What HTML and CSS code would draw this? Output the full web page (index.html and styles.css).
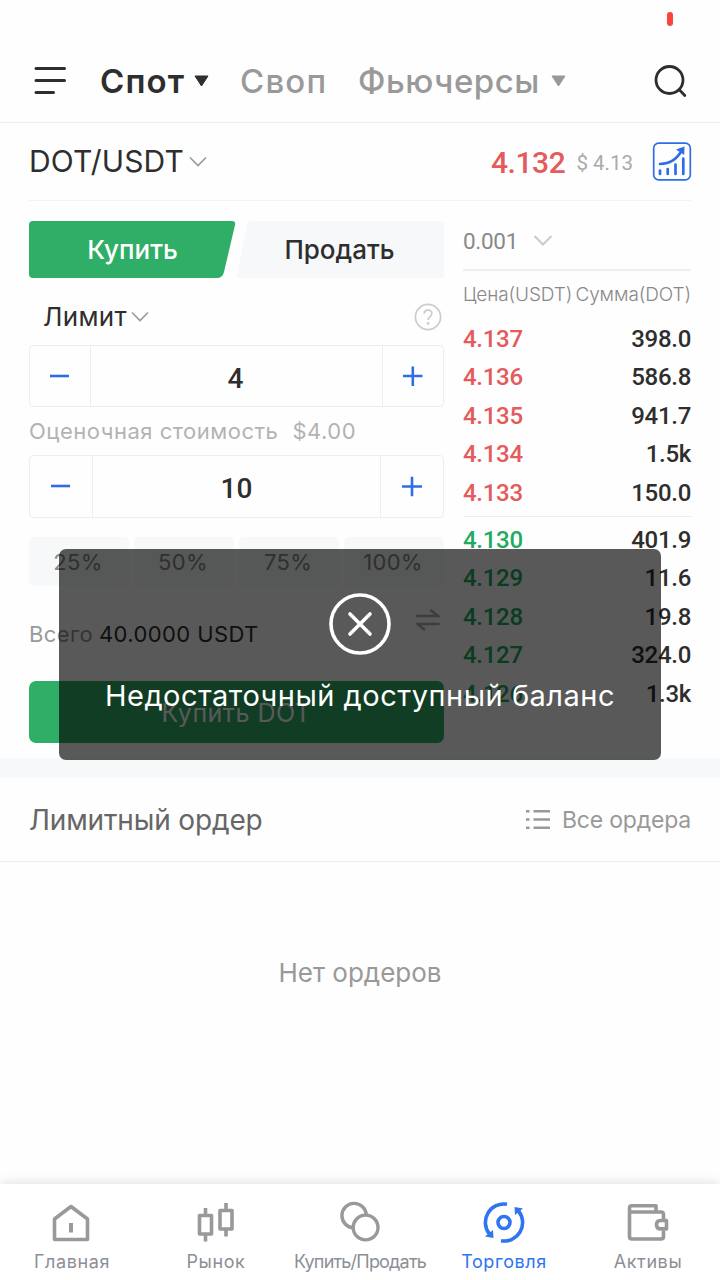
FILE: index.html
```html
<!DOCTYPE html>
<html lang="ru">
	<head>
		<meta charset="utf-8">
		<title>DOT/USDT</title>
		<link rel="stylesheet" href="styles.css">
	</head>
	<body>
		<div class="page">
			<div class="status"><i class="battery"></i></div>
			<div class="header">
				<svg class="menu" width="32" height="29" viewBox="0 0 32 29"><path d="M2 2.500h28.500M2 14.500h28.500M2 26.500h17.500" fill="none" stroke="#2e2e2e" stroke-width="3" stroke-linecap="round"/></svg>
				<span class="nav spot">Спот</span>
				<svg class="tri" width="15" height="12" viewBox="0 0 15 12"><path d="M1 1h13L7.500 11z" fill="#2e2e2e" stroke="#2e2e2e" stroke-linejoin="round"/></svg>
				<span class="nav swap">Своп</span>
				<span class="nav futures">Фьючерсы</span>
				<svg class="tri" width="15" height="12" viewBox="0 0 15 12"><path d="M1 1h13L7.500 11z" fill="#999" stroke="#999" stroke-linejoin="round"/></svg>
				<svg class="search" width="34" height="34" viewBox="0 0 34 34" fill="none" stroke="#2e2e2e" stroke-width="2.800" stroke-linecap="round"><circle cx="15.500" cy="16" r="13.500"/><path d="M25.300 25.800l5.500 5.700"/></svg>
			</div>
			<div class="pair">
				<span class="pair-name">DOT/USDT</span>
				<svg class="arrow" width="18" height="11" viewBox="0 0 18 11"><path d="M1 1.500l8 8 8-8" fill="none" stroke="#999" stroke-width="1.600"/></svg>
				<span class="price">4.132</span>
				<span class="usd">$ 4.13</span>
				<svg class="chart" width="40" height="40" viewBox="0 0 40 40" fill="none" stroke="#2f6de6"><rect x="1.700" y="1.200" width="36.600" height="36.600" rx="5" stroke-width="1.700"/><path d="M8 22c10-.5 16-4 21.500-13" stroke-width="2.600" stroke-linecap="round"/><path d="M24 7.500l8.500-3-.3 8.500z" fill="#2f6de6" stroke="none"/><path d="M8 28.500v3.500M15.700 27v5M23.500 22.500v9.500M31.300 16.500v15.500" stroke-width="2.700" stroke-linecap="round"/></svg>
			</div>
			<div class="main">
				<div class="trade">
					<div class="tabs">
						<div class="tab buy">
							<svg width="207" height="57" viewBox="0 0 207 57"><path d="M4 0H203Q207 0 206 4L195 51Q193.500 57 188 57H4Q0 57 0 53V4Q0 0 4 0Z" fill="#2eae66"/></svg>
							<span>Купить</span>
						</div>
						<div class="tab sell">
							<svg width="207" height="57" viewBox="0 0 207 57"><path d="M14 0H203Q207 0 207 4V53Q207 57 203 57H2Q-.5 57 0 54L10 4Q11 0 14 0Z" fill="#f6f8fa"/></svg>
							<span>Продать</span>
						</div>
					</div>
					<div class="type">
						<span class="type-name">Лимит</span>
						<svg class="arrow" width="18" height="11" viewBox="0 0 18 11"><path d="M1 1.500l8 8 8-8" fill="none" stroke="#999" stroke-width="1.600"/></svg>
						<svg class="help" width="28" height="28" viewBox="0 0 28 28" fill="none" stroke="#ccc" stroke-width="1.700"><circle cx="14" cy="14" r="12.600"/><path d="M10.200 10.800c0-5 7.600-4.800 7.600-.3 0 3-3.700 3.200-3.700 6.500"/><circle cx="14.100" cy="20.500" r=".6"/></svg>
					</div>
					<div class="stepper">
						<svg class="step" viewBox="0 0 60 60" width="60" height="60"><path d="M20 30h19" stroke="#2f6de6" stroke-width="2.600"/></svg>
						<span class="value">4</span>
						<svg class="step" viewBox="0 0 60 60" width="60" height="60"><path d="M20 30h19.500M29.800 20.500V40" stroke="#2f6de6" stroke-width="2.600"/></svg>
					</div>
					<div class="estimate"><span>Оценочная стоимость</span><span>$4.00</span></div>
					<div class="stepper amount">
						<svg class="step" viewBox="0 0 62 61" width="62" height="61"><path d="M21 30h19" stroke="#2f6de6" stroke-width="2.600"/></svg>
						<span class="value">10</span>
						<svg class="step" viewBox="0 0 62 61" width="62" height="61"><path d="M21 30.500h20M31 20.700v19.500" stroke="#2f6de6" stroke-width="2.600"/></svg>
					</div>
					<div class="percents">
						<span>25%</span>
						<span>50%</span>
						<span>75%</span>
						<span>100%</span>
					</div>
					<div class="total">
						<span class="total-label">Всего</span>
						<span class="total-sum">40.0000 USDT</span>
						<svg class="swap-icon" width="24" height="22" viewBox="0 0 24 22" fill="none" stroke="#b0b0b0" stroke-width="2.600"><path d="M0 7h22l-7.500-6M23.500 15H1.500l7.500 6"/></svg>
					</div>
					<div class="submit">Купить DOT</div>
				</div>
				<div class="book">
					<div class="depth">
						<span>0.001</span>
						<svg width="20" height="13" viewBox="0 0 20 13"><path d="M1.500 2l8.500 8.500L18.500 2" fill="none" stroke="#ccc" stroke-width="2.200"/></svg>
					</div>
					<div class="book-head"><span>Цена(USDT)</span><span>Сумма(DOT)</span></div>
					<ul class="list asks">
						<li><b>4.137</b><span>398.0</span></li>
						<li><b>4.136</b><span>586.8</span></li>
						<li><b>4.135</b><span>941.7</span></li>
						<li><b>4.134</b><span>1.5k</span></li>
						<li><b>4.133</b><span>150.0</span></li>
					</ul>
					<ul class="list bids">
						<li><b>4.130</b><span>401.9</span></li>
						<li><b>4.129</b><span>11.6</span></li>
						<li><b>4.128</b><span>19.8</span></li>
						<li><b>4.127</b><span>324.0</span></li>
						<li><b>4.126</b><span>1.3k</span></li>
					</ul>
				</div>
			</div>
			<div class="orders">
				<span class="orders-title">Лимитный ордер</span>
				<svg width="24" height="20" viewBox="0 0 24 20" fill="none" stroke="#999" stroke-width="2.400"><path d="M0 1.200h3.500M0 9.500h3.500M0 17.800h3.500M7.500 1.200H24M7.500 9.500H24M7.500 17.800H24"/></svg>
				<span class="orders-all">Все ордера</span>
			</div>
			<div class="empty">Нет ордеров</div>
			<div class="tabbar">
				<div class="item">
					<svg width="44" height="44" viewBox="0 0 44 44" fill="none" stroke="#999" stroke-width="3.600" stroke-linejoin="round"><path d="M4.500 19L21 6.500l16.500 12.500V39.500h-33z"/><path d="M21 23v9.500" stroke-width="4"/></svg>
					<span class="home">Главная</span>
				</div>
				<div class="item">
					<svg width="44" height="44" viewBox="0 0 44 44" fill="none" stroke="#999" stroke-width="3.600" stroke-linejoin="round"><path d="M5.500 15.500h12v18.500h-12zM26 10.500h12v18.500H26zM11.500 8v7M11.500 34v7.500M32 3v7M32 29v7.500"/></svg>
					<span class="market">Рынок</span>
				</div>
				<div class="item">
					<svg width="44" height="44" viewBox="0 0 44 44" fill="none" stroke="#999" stroke-width="3.400"><path d="M15.500 27.800A12.200 12.200 0 1 1 28.300 14.800"/><circle cx="27.600" cy="27.500" r="12.400"/></svg>
					<span class="fiat">Купить/Продать</span>
				</div>
				<div class="item active">
					<svg width="44" height="44" viewBox="0 0 44 44" fill="none" stroke="#2f74f0" stroke-width="3.600"><circle cx="22" cy="22.500" r="6"/><path d="M25 4.300A18.400 18.400 0 0 0 7.500 34M19 40.700A18.400 18.400 0 0 0 36.500 11"/><path d="M3 36.500l8.500 1.500L11 30zM41 8.500l-8.500-1.500L33 15z" fill="#2f74f0" stroke="none"/></svg>
					<span class="deal">Торговля</span>
				</div>
				<div class="item">
					<svg width="44" height="44" viewBox="0 0 44 44" fill="none" stroke="#999" stroke-width="3.600" stroke-linejoin="round"><path d="M37.500 20v-5.500q0-2.500-2.500-2.500H3.500V36.500q0 2.500 2.500 2.500h29q2.500 0 2.500-2.500v-6M3.500 13V8q0-2.200 2.200-2.200H30V12"/><path d="M40.500 20.500h-6q-4 0-4 4.200t4 4.200h6z"/></svg>
					<span class="assets">Активы</span>
				</div>
			</div>
			<div class="toast">
				<svg width="64" height="64" viewBox="0 0 64 64" fill="none" stroke="#fff" stroke-width="3.600" stroke-linecap="round"><circle cx="32" cy="32" r="29"/><path d="M22 22l20 20M42 22L22 42"/></svg>
				<span>Недостаточный доступный баланс</span>
			</div>
		</div>
	</body>
</html>
```
FILE: styles.css
```css
*{
	margin:0;
	padding:0;
	box-sizing: border-box;
}
ul{
	list-style:none;
}
svg{
	display:block;
	flex:none;
}
body{
	background-color: #fefefe;
	font-family: Inter, "Liberation Sans", sans-serif;
	color:#2e2e2e;
}
.page{
	width:720px;
	height:1280px;
	position:relative;
	overflow: hidden;
	display:flex;
	flex-direction: column;
	white-space: nowrap;
}
.status{
	height:40px;
	padding:12px 47px 0 0;
	display:flex;
	justify-content: flex-end;
}
.battery{
	width:6px;
	height:14px;
	border-radius:3px;
	background-color: #fa453c;
}
.header{
	height:83px;
	padding:0 32px 1px 34px;
	display:flex;
	align-items: center;
	border-bottom:1px solid #eee;
}
.nav{
	font-size:33px;
	font-weight:550;
	letter-spacing:1.2px;
	color:#999;
}
.spot{
	margin-left:34px;
	width:85px;
	font-weight:600;
	letter-spacing:1.1px;
	color:#2e2e2e;
}
.tri{
	margin-left:9px;
}
.swap{
	margin-left:31px;
	width:87px;
}
.futures{
	margin-left:31px;
	width:184px;
	letter-spacing:.5px;
}
.search{
	margin-left:auto;
}
.pair{
	height:78px;
	margin:0 29px;
	display:flex;
	align-items: center;
	border-bottom:1px solid #f2f2f2;
}
.pair-name{
	font-size:30px;
	letter-spacing:.1px;
	width:154px;
	padding-bottom:2px;
}
.arrow{
	margin-left:6px;
}
.price,.usd,.value,.depth,.list{
	font-family: Roboto, "Liberation Sans", sans-serif;
	font-weight:500;
}
.price{
	margin-left:auto;
	padding-top:2px;
	font-size:30px;
	letter-spacing:-.4px;
	color:#e55a5a;
}
.usd{
	margin-left:11px;
	margin-right:19px;
	padding-top:2px;
	font-size:20.5px;
	font-weight:400;
	color:#aaa;
}
.chart{
	margin-right:-1px;
}
.main{
	height:577px;
	padding:20px 29px 0;
	display:flex;
	justify-content: space-between;
	border-bottom:20px solid #f6f8fa;
}
.trade{
	width:415px;
}
.tabs{
	display:flex;
	justify-content: space-between;
}
.tab{
	width:207px;
	display:grid;
	place-items: center;
	font-size:26px;
	font-weight:500;
}
.tab svg,.tab span{
	grid-area: 1 / 1;
}
.buy span{
	color:#fff;
}
.sell span{
	margin-right:2px;
}
.type{
	height:67px;
	padding:10px 2px 0 14px;
	display:flex;
	align-items: center;
}
.type-name{
	font-size:26px;
	letter-spacing:.3px;
}
.type .arrow{
	margin-left:4px;
}
.help{
	margin-left:auto;
}
.stepper{
	height:62px;
	border:1px solid #eee;
	border-radius:4px;
	display:flex;
}
.value{
	flex:1;
	border:1px solid #eee;
	border-width:0 1px;
	font-size:28px;
	line-height:65px;
	padding-right:2px;
	text-align:center;
}
.estimate{
	height:48px;
	line-height:49px;
	display:flex;
	gap:14px;
	font-size:22px;
	letter-spacing:.5px;
	color:#b3b3b3;
}
.amount{
	height:63px;
}
.amount .value{
	padding-right:0;
}
.percents{
	margin-top:19px;
	display:grid;
	grid-template-columns: repeat(4, 1fr);
	gap:5px;
}
.percents span{
	height:49px;
	line-height:51px;
	padding-right:2px;
	border-radius:5px;
	text-align:center;
	font-size:22px;
	letter-spacing:.3px;
	background-color: #f6f8fa;
	color:#888;
}
.total{
	height:95px;
	display:flex;
	align-items: center;
	font-size:22px;
	letter-spacing:.4px;
}
.total-label{
	width:70px;
	color:#999;
}
.swap-icon{
	margin:0 4px 28px auto;
}
.submit{
	height:62px;
	line-height:64px;
	border-radius:7px;
	text-align:center;
	font-size:25px;
	letter-spacing:.5px;
	background-color: #2eae66;
	color:#fff;
}
.book{
	width:228px;
}
.depth{
	height:50px;
	padding-bottom:9px;
	border-bottom:2px solid #eee;
	display:flex;
	align-items: center;
	gap:15px;
	font-size:22.5px;
	font-weight:400;
	letter-spacing:-.3px;
	color:#888;
}
.book-head{
	height:49px;
	line-height:48px;
	display:flex;
	justify-content: space-between;
	font-size:19px;
	font-weight:300;
	letter-spacing:-.1px;
	color:#888;
}
.list{
	font-size:24px;
	letter-spacing:-.3px;
	line-height:38.4px;
}
.list li{
	display:flex;
	justify-content: space-between;
}
.list b{
	font-weight:500;
	color:#e55a5a;
}
.asks{
	height:197px;
	border-bottom:1px solid #eee;
}
.bids{
	padding-top:4px;
}
.bids b{
	color:#22ab5f;
}
.orders{
	height:84px;
	padding:0 29px;
	display:flex;
	align-items: center;
	border-bottom:1px solid #eee;
}
.orders-title{
	margin-right:auto;
	font-size:28px;
	letter-spacing:-.15px;
	color:#666;
}
.orders-all{
	margin-left:12px;
	font-size:23px;
	letter-spacing:-.2px;
	color:#999;
}
.empty{
	padding-top:95px;
	text-align:center;
	font-size:26px;
	color:#999;
}
.tabbar{
	height:96px;
	margin-top:auto;
	padding-top:16px;
	display:flex;
	background-color: #fff;
	box-shadow: 0 0 12px rgba(0,0,0,.14);
}
.item{
	width:144px;
	display:flex;
	flex-direction: column;
	align-items: center;
	gap:7px;
	font-size:18px;
	letter-spacing:.6px;
	color:#8b8f96;
}
.item .fiat{
	letter-spacing:-.8px;
}
.active{
	color:#2f74f0;
}
.toast{
	position:absolute;
	left:59px;
	top:549px;
	width:602px;
	height:211px;
	padding-top:43px;
	border-radius:7px;
	display:flex;
	flex-direction: column;
	align-items: center;
	gap:22px;
	font-size:29px;
	letter-spacing:.5px;
	background-color: rgba(0,0,0,.65);
	color:#fff;
}
```
